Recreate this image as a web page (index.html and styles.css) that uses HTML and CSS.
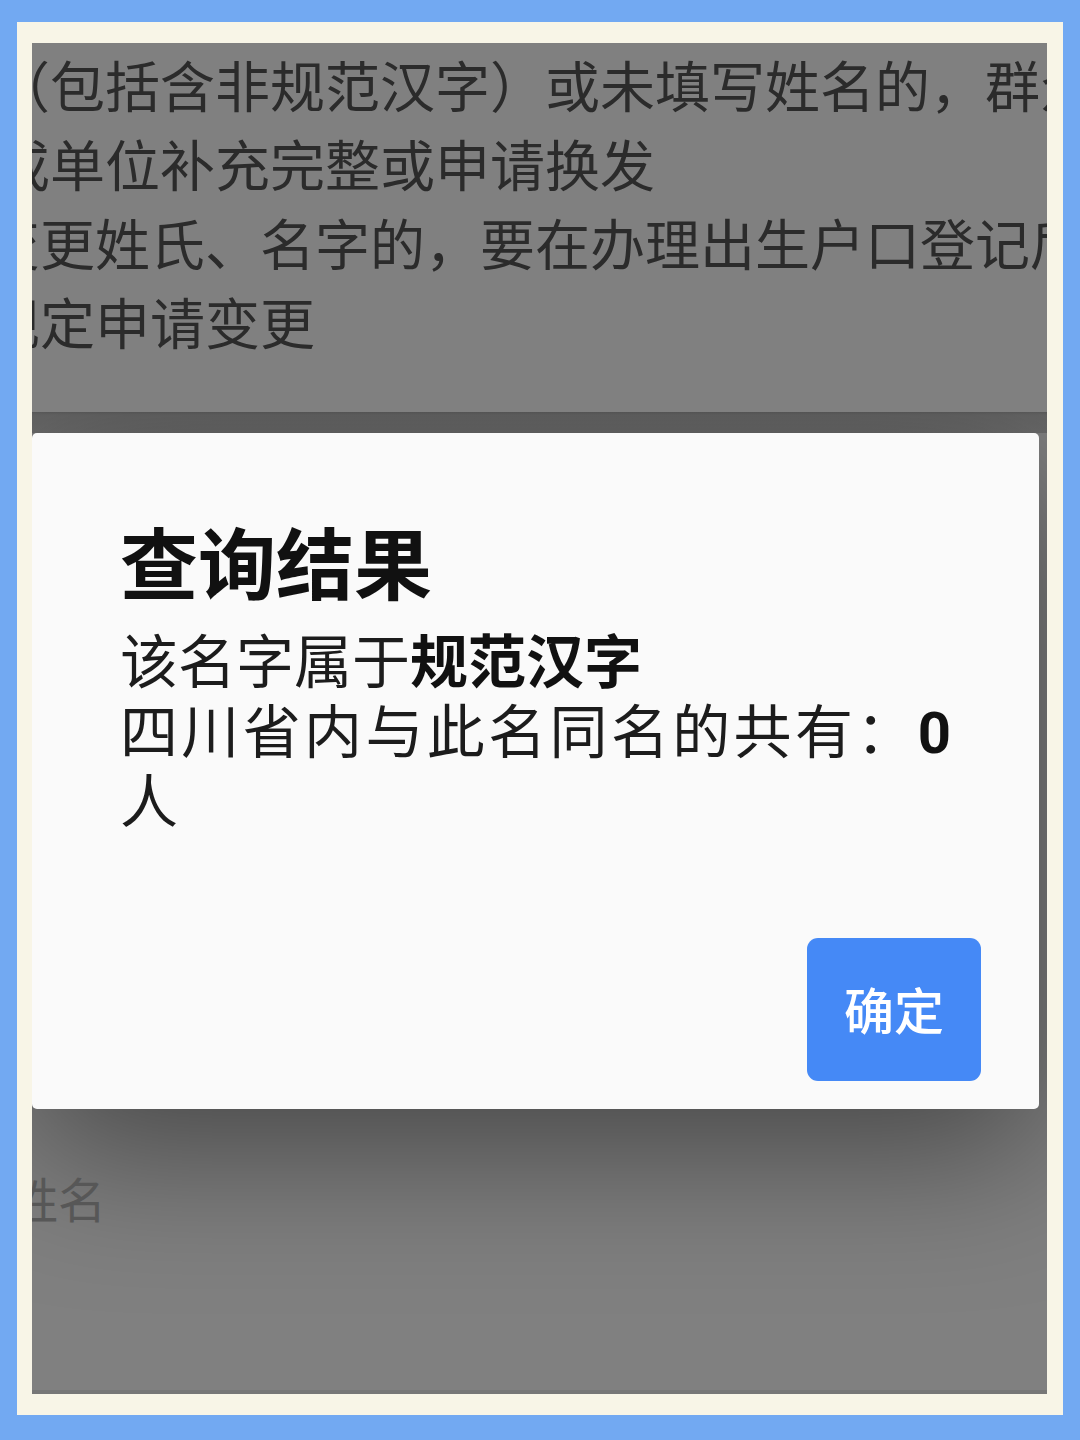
FILE: index.html
```html
<!DOCTYPE html>
<html lang="zh-CN">
<head>
<meta charset="utf-8">
<title>查询结果</title>
<link rel="stylesheet" href="styles.css">
</head>
<body>
<div class="frame">
  <div class="screen">
    <div class="notice">
      <div class="para para1">
        <div class="line">（包括含非规范汉字）或未填写姓名的，群众可到</div>
        <div class="line">或单位补充完整或申请换发</div>
      </div>
      <div class="para para2">
        <div class="line">变更姓氏、名字的，要在办理出生户口登记后</div>
        <div class="line">规定申请变更</div>
      </div>
    </div>
    <div class="stage">
      <div class="dialog">
        <h1 class="title">查询结果</h1>
        <div class="msg">
          <div>该名字属于<b>规范汉字</b></div>
          <div class="justify">四川省内与此名同名的共有：<b>0</b> 人</div>
        </div>
        <div class="actions">
          <div class="btn">确定</div>
        </div>
      </div>
    </div>
    <div class="field">姓名</div>
  </div>
</div>
</body>
</html>
```
FILE: styles.css
```css
html, body {
  margin: 0;
  padding: 0;
}
body {
  background: #72a9f2;
  width: 1080px;
  height: 1440px;
  overflow: hidden;
}
.frame {
  margin: 22px 17px 25px 17px;
  padding: 21px 16px 21px 15px;
  background: #f8f5e7;
}
.screen {
  height: 1351px;
  box-sizing: border-box;
  background: #808080;
  border-bottom: 4px solid #777;
  overflow: hidden;
  display: flex;
  flex-direction: column;
}
.notice {
  flex: none;
  position: relative;
  z-index: 1;
  height: 369px;
  box-sizing: border-box;
  padding-top: 1px;
  background: #808080;
  font-family: "Noto Sans CJK SC", sans-serif;
  font-size: 55px;
  line-height: 79px;
  color: #2b2b2b;
  white-space: nowrap;
}
.para1 { margin-left: -37px; }
.para2 { margin-left: -47px; }

.stage {
  flex: none;
  padding-top: 21px;
  background: linear-gradient(to bottom, #5c5c5c 0, #656565 3px, #6a6a6a 21px, transparent 21px);
}
.dialog {
  width: 1007px;
  height: 676px;
  box-sizing: border-box;
  background: #fafafa;
  border-radius: 5px;
  box-shadow: 0 40px 150px rgba(0, 0, 0, 0.46);
  padding: 80px 58px 28px 88px;
  display: flex;
  flex-direction: column;
}
.title {
  margin: 0;
  font-family: "Noto Sans CJK SC", sans-serif;
  font-weight: 700;
  font-size: 78px;
  line-height: 94px;
  color: #111;
}
.msg {
  margin-top: 21px;
  padding-right: 30px;
  font-family: Roboto, "Noto Sans CJK SC", sans-serif;
  font-size: 58px;
  line-height: 70px;
  color: #1c1c1c;
}
.justify {
  text-align: justify;
}
.msg b {
  font-weight: 700;
  color: #111;
}
.actions {
  margin-top: auto;
  display: flex;
  justify-content: flex-end;
}
.btn {
  width: 174px;
  height: 143px;
  border-radius: 11px;
  background: #4589f6;
  color: #fff;
  font-family: "Noto Sans CJK SC", sans-serif;
  font-weight: 500;
  font-size: 50px;
  line-height: 1;
  padding-bottom: 4px;
  box-sizing: border-box;
  display: flex;
  align-items: center;
  justify-content: center;
}
.field {
  flex: none;
  margin-top: 55px;
  margin-left: -22px;
  font-family: "Noto Sans CJK SC", sans-serif;
  font-size: 48px;
  line-height: 66px;
  color: #575757;
  white-space: nowrap;
}
```
